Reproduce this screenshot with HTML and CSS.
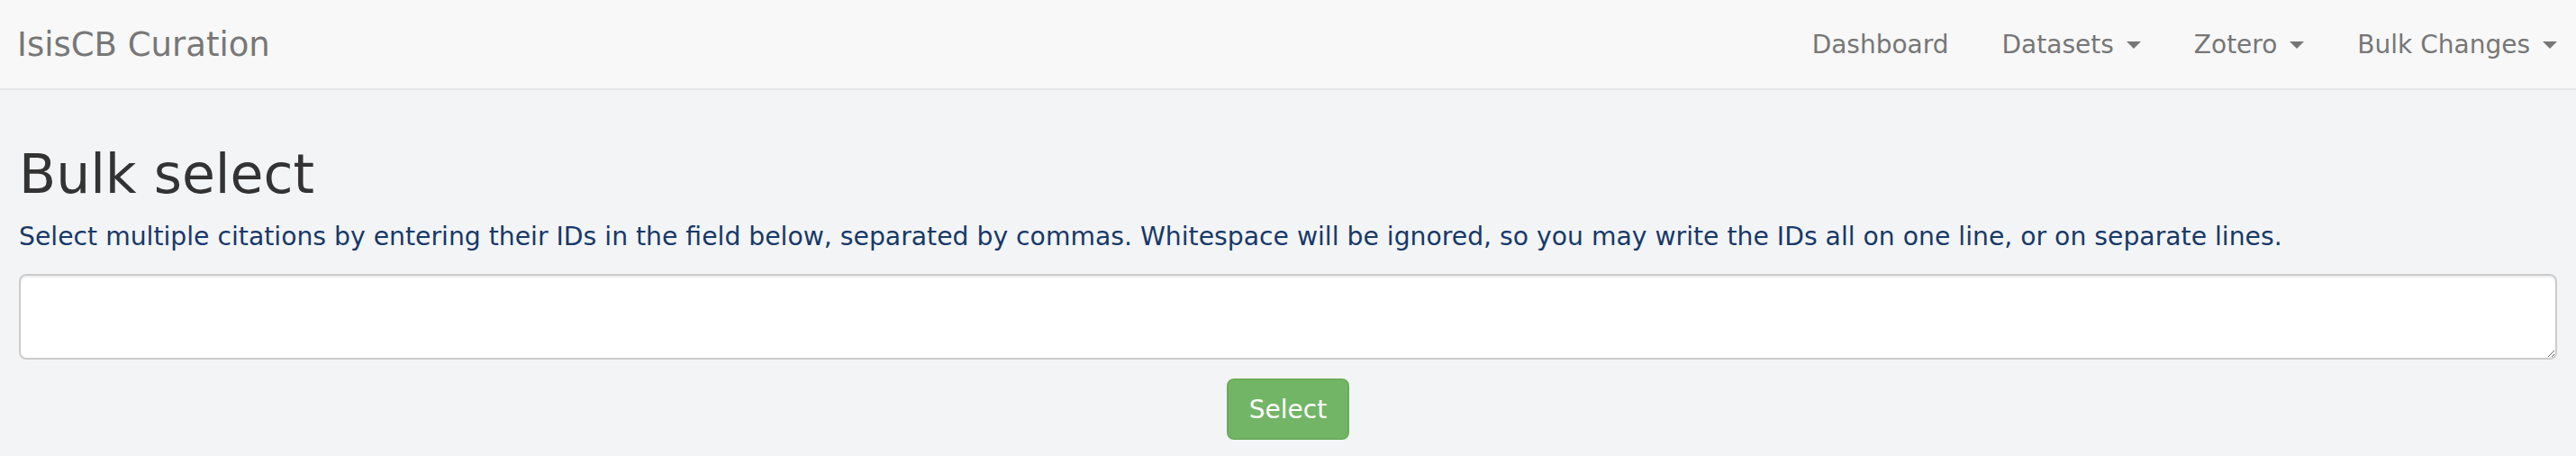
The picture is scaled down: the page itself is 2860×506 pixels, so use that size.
FILE: index.html
```html
<!DOCTYPE html>
<html lang="en">
<head>
<meta charset="utf-8">
<title>Bulk select - IsisCB Curation</title>
<link rel="stylesheet" href="styles.css">
</head>
<body>
<nav class="navbar">
  <a class="brand" href="#">IsisCB Curation</a>
  <ul class="nav">
    <li><a href="#">Dashboard</a></li>
    <li><a href="#">Datasets <span class="caret"></span></a></li>
    <li><a href="#">Zotero <span class="caret"></span></a></li>
    <li><a href="#">Bulk Changes <span class="caret"></span></a></li>
  </ul>
</nav>
<main class="content">
  <h1 class="title">Bulk select</h1>
  <p class="help">Select multiple citations by entering their IDs in the field below, separated by commas. Whitespace will be ignored, so you may write the IDs all on one line, or on separate lines.</p>
  <form class="form">
    <textarea class="ids" name="ids"></textarea>
    <div class="actions">
      <button type="button" class="btn">Select</button>
    </div>
  </form>
</main>
</body>
</html>
```
FILE: styles.css
```css
html, body {
  margin: 0;
  padding: 0;
}
body {
  background: #f3f4f6;
  font-family: "DejaVu Sans", Verdana, sans-serif;
  color: #333;
  height: 506px;
  overflow: hidden;
}
.navbar {
  display: flex;
  align-items: center;
  justify-content: space-between;
  height: 98px;
  background: #f8f8f8;
  border-bottom: 2px solid #e7e7e7;
  padding: 0 0 0 19px;
}
.brand {
  font-size: 37px;
  color: #777;
  text-decoration: none;
}
.nav {
  display: flex;
  list-style: none;
  margin: 0;
  padding: 0;
}
.nav a {
  display: flex;
  align-items: center;
  font-size: 28px;
  color: #777;
  text-decoration: none;
  padding: 0 21px 0 38px;
}
.caret {
  display: inline-block;
  width: 0;
  height: 0;
  margin-left: 14px;
  margin-top: 2px;
  border-top: 8px solid #777;
  border-left: 8px solid transparent;
  border-right: 8px solid transparent;
}
.content {
  padding: 0 21px;
}
.title {
  font-size: 60px;
  font-weight: normal;
  line-height: 66px;
  margin: 60px 0 0 0;
  color: #333;
}
.help {
  font-size: 28.25px;
  line-height: 40px;
  margin: 17px 0 0 0;
  color: #17396a;
}
.form {
  margin-top: 21px;
}
.ids {
  display: block;
  box-sizing: border-box;
  width: 100%;
  height: 95px;
  border: 2px solid #ccc;
  border-radius: 8px;
  background: #fff;
  box-shadow: inset 0 2px 2px rgba(0,0,0,0.075);
  resize: vertical;
  margin: 0;
}
.actions {
  display: flex;
  justify-content: center;
  margin-top: 21px;
}
.btn {
  box-sizing: border-box;
  width: 136px;
  height: 68px;
  background: #73b566;
  border: 2px solid #69ad5c;
  border-radius: 8px;
  color: #fff;
  font-family: "DejaVu Sans", Verdana, sans-serif;
  font-size: 28px;
  padding: 0;
}
```
